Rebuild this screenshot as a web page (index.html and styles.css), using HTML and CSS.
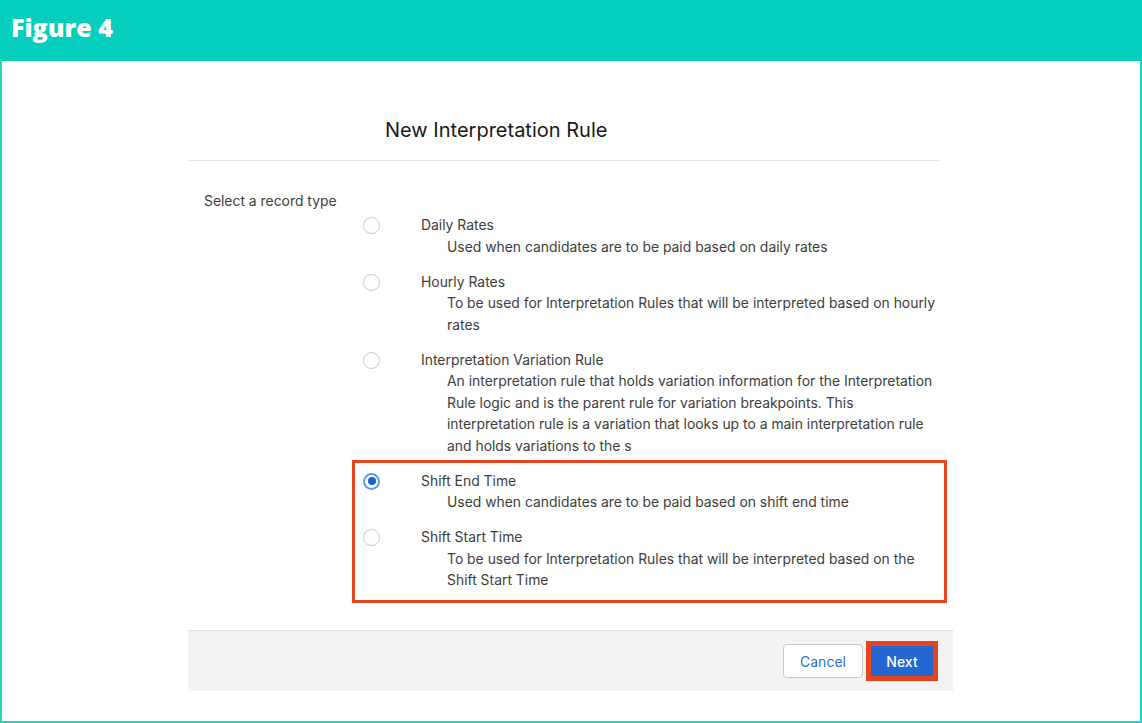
FILE: index.html
```html
<!DOCTYPE html>
<html lang="en">
<head>
    <meta charset="UTF-8">
    <meta name="viewport" content="width=device-width, initial-scale=1.0">
    <title>Figure 4</title>
    <link rel="stylesheet" href="styles.css">
</head>
<body>
    <header class="figure-bar">
        <h1 class="figure-title">Figure 4</h1>
    </header>

    <main class="frame">
        <div class="modal">
            <div class="modal-header">
                <h2 class="modal-title">New Interpretation Rule</h2>
            </div>

            <div class="modal-body">
                <div class="field-label">Select a record type</div>
                <div class="options">
                    <label class="option">
                        <span class="radio"></span>
                        <span class="option-text">
                            <span class="option-name">Daily Rates</span>
                            <span class="option-desc">Used when candidates are to be paid based on daily rates</span>
                        </span>
                    </label>
                    <label class="option">
                        <span class="radio"></span>
                        <span class="option-text">
                            <span class="option-name">Hourly Rates</span>
                            <span class="option-desc">To be used for Interpretation Rules that will be interpreted based on hourly rates</span>
                        </span>
                    </label>
                    <label class="option">
                        <span class="radio"></span>
                        <span class="option-text">
                            <span class="option-name">Interpretation Variation Rule</span>
                            <span class="option-desc">An interpretation rule that holds variation information for the Interpretation Rule logic and is the parent rule for variation breakpoints. This interpretation rule is a variation that looks up to a main interpretation rule and holds variations to the s</span>
                        </span>
                    </label>

                    <div class="highlight">
                        <label class="option">
                            <span class="radio checked"></span>
                            <span class="option-text">
                                <span class="option-name">Shift End Time</span>
                                <span class="option-desc">Used when candidates are to be paid based on shift end time</span>
                            </span>
                        </label>
                        <label class="option">
                            <span class="radio"></span>
                            <span class="option-text">
                                <span class="option-name">Shift Start Time</span>
                                <span class="option-desc">To be used for Interpretation Rules that will be interpreted based on the Shift Start Time</span>
                            </span>
                        </label>
                    </div>
                </div>
            </div>

            <div class="modal-footer">
                <button class="btn btn-neutral">Cancel</button>
                <button class="btn btn-brand">Next</button>
            </div>
        </div>
    </main>
</body>
</html>
```

FILE: styles.css
```css
* {
    margin: 0;
    padding: 0;
    box-sizing: border-box;
}

body {
    width: 1142px;
    height: 723px;
    overflow: hidden;
    background: #fff;
    font-family: Inter, 'Liberation Sans', Arial, sans-serif;
    color: #3e3e3c;
}

.figure-bar {
    height: 61px;
    background: #05cebc;
    display: flex;
    align-items: center;
    padding: 0 0 7px 11px;
}

.figure-title {
    font-family: 'Open Sans', Arial, sans-serif;
    font-size: 25px;
    font-weight: 800;
    color: #fff;
}

.frame {
    height: 662px;
    border: 2px solid #1ed8c4;
    border-top: none;
}

.modal {
    margin-left: 186px;
    width: 765px;
}

.modal-header {
    width: 752px;
    padding: 57px 0 18px 197px;
    border-bottom: 1px solid #e5e5e5;
}

.modal-title {
    font-size: 20px;
    line-height: 24px;
    font-weight: 400;
    color: #181818;
}

.modal-body {
    padding: 30px 0 27px 16px;
    font-size: 13.9px;
    line-height: 21.5px;
}

.field-label {
    margin-bottom: 2.5px;
}

.options {
    display: flex;
    flex-direction: column;
    margin-left: 159px;
    width: 577px;
}

.option {
    display: flex;
    margin-bottom: 13.5px;
    cursor: pointer;
}

.radio {
    flex: none;
    width: 17px;
    height: 17px;
    margin-top: 2px;
    border: 1px solid #c9c9c9;
    border-radius: 50%;
    background: #fff;
    display: flex;
    align-items: center;
    justify-content: center;
}

.radio.checked {
    border: 2px solid #5b9cf0;
}

.radio.checked::after {
    content: '';
    width: 8px;
    height: 8px;
    border-radius: 50%;
    background: #1b63d0;
}

.option-text {
    margin-left: 41px;
    display: flex;
    flex-direction: column;
}

.option-desc {
    padding-left: 26px;
}

.highlight {
    margin: -10.5px -7px 0 -11px;
    padding: 7.5px 4px 8.5px 8px;
    border: 3px solid #e8441f;
}

.highlight .option:last-child {
    margin-bottom: 0;
}

.modal-footer {
    height: 61px;
    background: #f3f3f3;
    border-top: 1px solid #e2e2e2;
    display: flex;
    align-items: center;
    justify-content: flex-end;
    gap: 8px;
    padding: 0 20px 0 0;
}

.btn {
    font-family: inherit;
    font-size: 14px;
    border-radius: 4px;
    cursor: pointer;
}

.btn-neutral {
    width: 80px;
    height: 34px;
    background: #fff;
    border: 1px solid #c9c9c9;
    color: #2e6fcb;
}

.btn-brand {
    width: 62px;
    height: 30px;
    background: #2467cf;
    border: none;
    border-radius: 0;
    color: #fff;
    font-weight: 500;
    outline: 5px solid #e8441f;
}
```
